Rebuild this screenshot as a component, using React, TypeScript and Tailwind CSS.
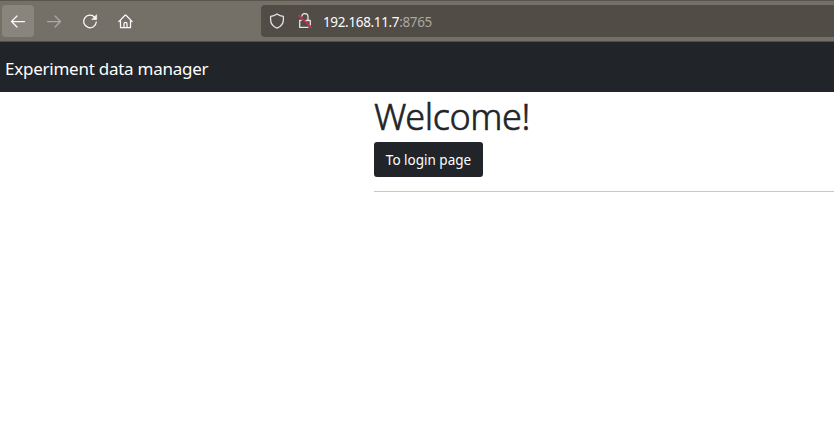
import type { ReactNode } from 'react';

function ToolButton({ label, active, children }: { label: string; active?: boolean; children: ReactNode }) {
  return (
    <button
      aria-label={label}
      className={`flex h-8 w-8 items-center justify-center rounded-[4px] ${active ? 'bg-[#89857d]' : ''}`}
    >
      <svg
        width="16"
        height="16"
        viewBox="0 0 16 16"
        fill="none"
        stroke="#fbfbfe"
        strokeWidth="1.25"
        strokeLinecap="round"
        strokeLinejoin="round"
      >
        {children}
      </svg>
    </button>
  );
}

function BrowserBar() {
  return (
    <header className="flex h-[42px] items-center border-t border-b border-t-[#59544c] border-b-[#514c45] bg-[#757067] pl-[2px]">
      <div className="flex gap-1">
        <ToolButton label="Back" active>
          <path d="M14.5 8.5h-13M7 3 1.5 8.5 7 14" />
        </ToolButton>
        <ToolButton label="Forward">
          <path d="M1.5 8.5h13M9 3l5.5 5.5L9 14" opacity=".42" />
        </ToolButton>
        <ToolButton label="Reload">
          <path d="M12.5 4A6.3 6.3 0 1 0 14.3 9" />
          <path d="M14.6 2v4.5h-4.5z" fill="#fbfbfe" strokeWidth=".6" />
        </ToolButton>
        <ToolButton label="Home">
          <path d="m.8 8.6 6.2-6.3a.7.7 0 0 1 1 0l6.2 6.3M2.5 7.4v7.1h10V7.4M6 14.2v-3.4a1.5 1.5 0 0 1 3 0v3.4" />
        </ToolButton>
      </div>
      <div className="ml-[119px] flex h-8 flex-1 items-center rounded-l-[4px] bg-[#514c45] pl-2">
        <svg width="16" height="16" viewBox="0 0 16 16" fill="none" stroke="#e5e3df" strokeWidth="1.3" strokeLinejoin="round">
          <path d="M8 1C6 2.5 4 3.2 1.6 3.4v3.1c0 4.1 2.5 7.1 6.4 8.7 3.9-1.6 6.4-4.6 6.4-8.7V3.4C12 3.2 10 2.5 8 1z" />
        </svg>
        <svg className="ml-3" width="16" height="16" viewBox="0 0 16 16" fill="none" stroke="#e5e3df" strokeWidth="1.3">
          <path d="M4.8 3.6a3.1 3.1 0 0 1 6.2 0v3.8M8.5 7.5h4.8v5M11.5 14.4H2.7v-7h2" strokeLinejoin="round" />
          <path d="m1.4 2 13.2 13" stroke="#e22850" strokeWidth="1.4" />
        </svg>
        <span className="ml-[10px] pt-px font-['Noto_Sans',sans-serif] text-[13.5px] leading-5 tracking-[-0.35px] text-[#fbfbfe]">
          192.168.11.7<span className="text-[#aaa7a2]">:8765</span>
        </span>
      </div>
    </header>
  );
}

export default function App() {
  return (
    <div className="h-[443px] overflow-hidden bg-white font-['Noto_Sans',sans-serif] text-[#212529]">
      <BrowserBar />
      <nav className="flex h-[50px] items-center bg-[#212529] pl-[5px]">
        <span className="mt-[3px] text-[17px] leading-[27px] tracking-[-0.25px] whitespace-nowrap text-white">
          Experiment data manager
        </span>
      </nav>
      <main className="ml-[374px] flex flex-col items-start">
        <h1 className="mt-[3px] h-[43px] text-[36px] leading-[43px] font-light tracking-[-0.4px] [-webkit-text-stroke:0.6px_#212529]">
          Welcome!
        </h1>
        <button className="mt-1 flex h-[35px] w-[109px] items-center justify-center rounded-[3px] bg-[#212529] pt-px text-[13.5px] whitespace-nowrap text-white">
          To login page
        </button>
        <hr className="mt-[14px] w-full border-t border-[#c7c8c9]" />
      </main>
    </div>
  );
}
